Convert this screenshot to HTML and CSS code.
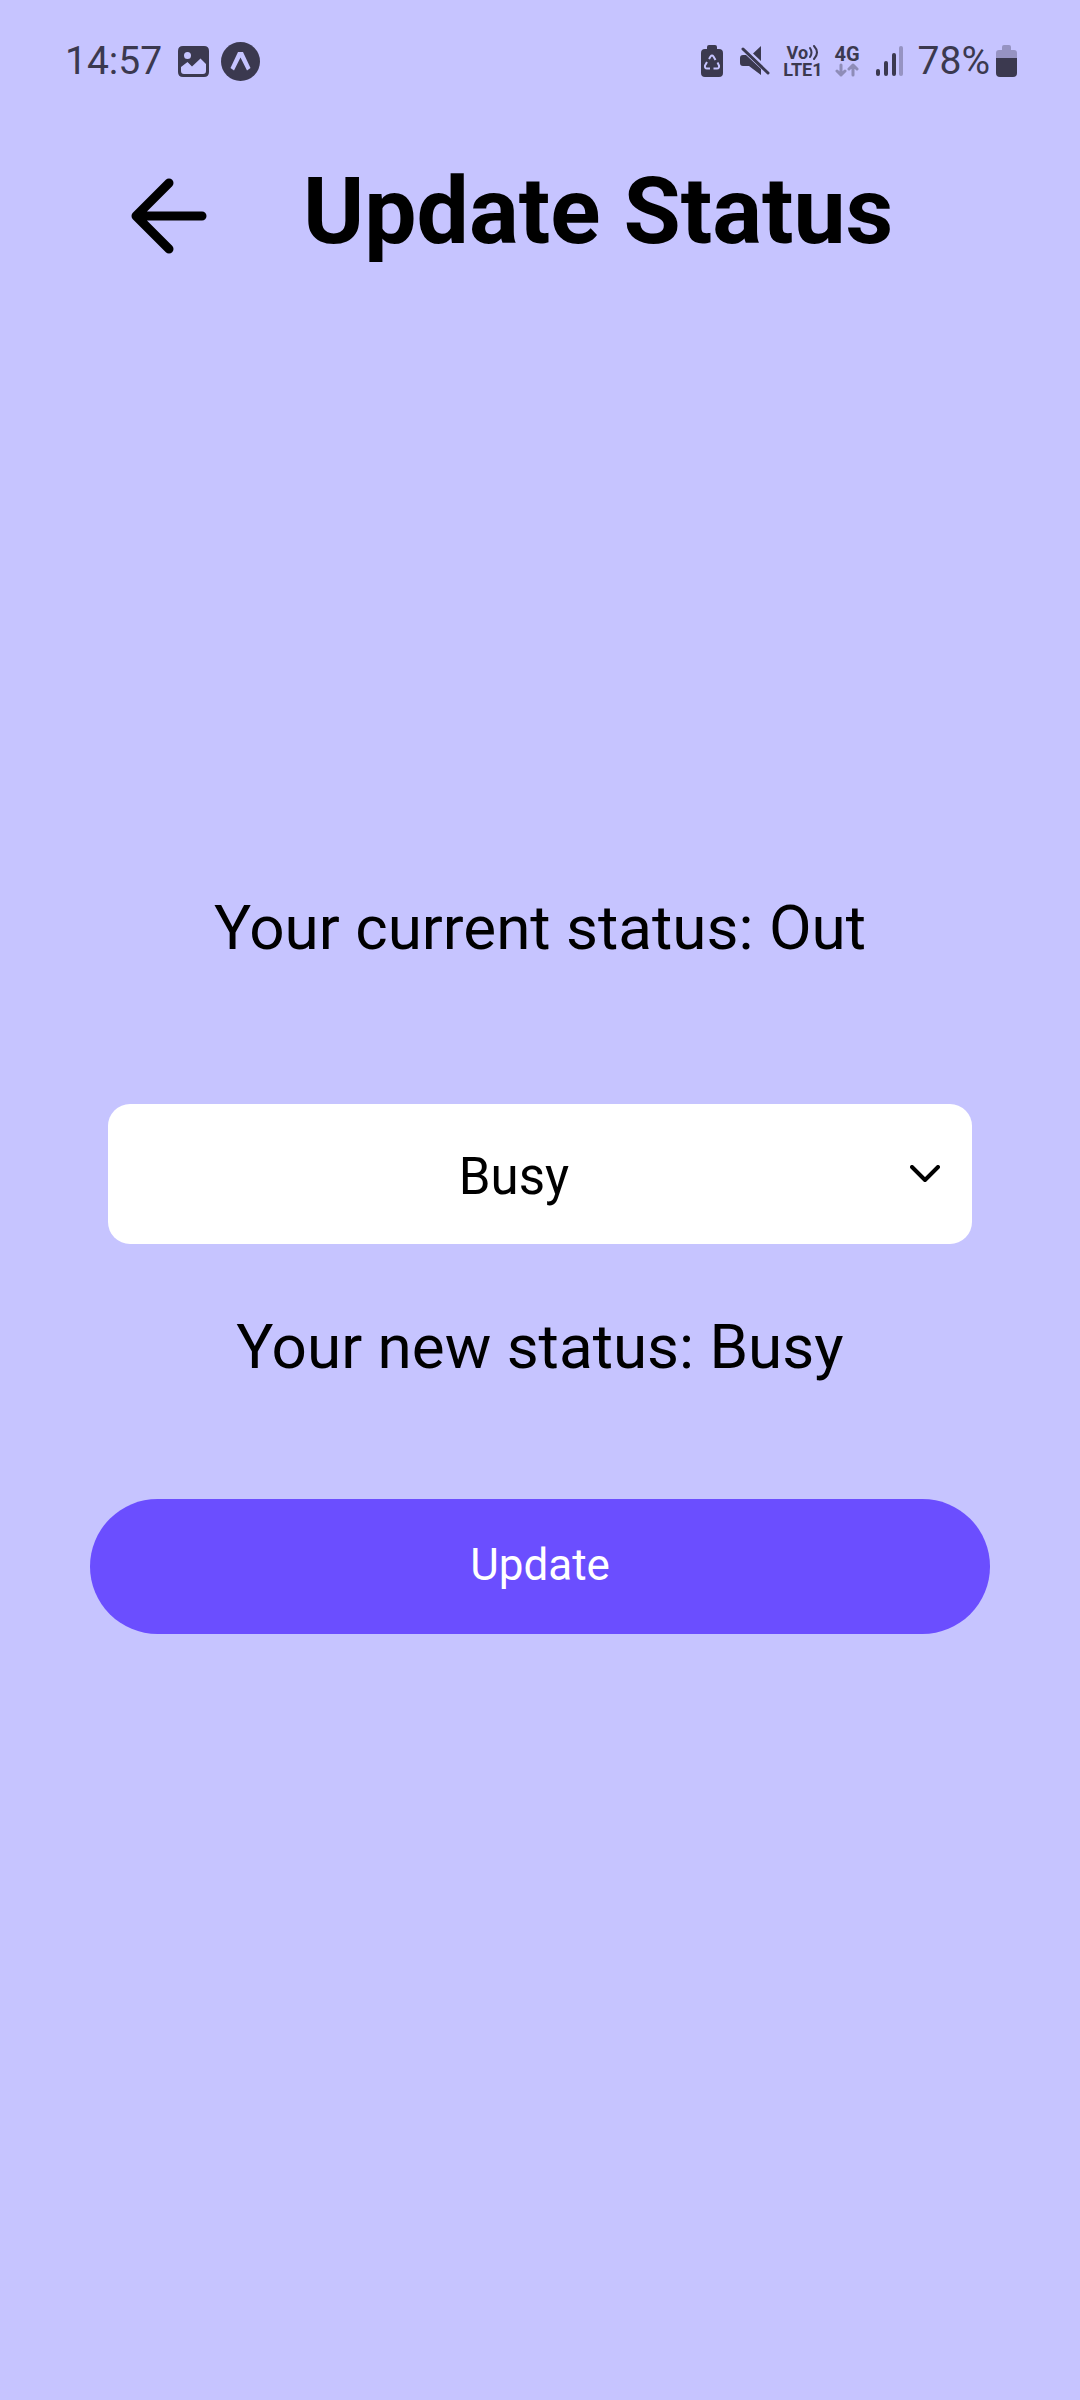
FILE: index.html
```html
<!DOCTYPE html>
<html lang="en">
<head>
<meta charset="utf-8">
<meta name="viewport" content="width=device-width, initial-scale=1">
<title>Update Status</title>
<link rel="stylesheet" href="styles.css">
</head>
<body>
<div class="status-bar">
  <div class="status-left">
    <span class="clock">14:57</span>
    <svg class="icon-picture" width="31" height="31" viewBox="0 0 31 31" aria-hidden="true">
      <path fill="currentColor" fill-rule="evenodd" d="M5 0H26Q31 0 31 5V26Q31 31 26 31H5Q0 31 0 26V5Q0 0 5 0ZM9.500 6A3.500 3.500 0 1 0 9.500 13A3.500 3.500 0 1 0 9.500 6ZM3 21V25Q3 28 6 28H25Q28 28 28 25V18L22.500 12.500L14 20.500L9.500 16Z"/>
    </svg>
    <svg class="icon-app" width="39" height="39" viewBox="0 0 39 39" aria-hidden="true">
      <circle cx="19.500" cy="19.500" r="19.500" fill="currentColor"/>
      <path class="icon-cutout" d="M17 10H22L29.500 26L26 28.500L19.500 15.500L13 28.500L9.500 26Z"/>
    </svg>
  </div>
  <div class="status-right">
    <svg width="22" height="32" viewBox="0 0 22 32" aria-hidden="true">
      <path fill="currentColor" d="M8 0H14Q16 0 16 2V4H18Q22 4 22 8V28Q22 32 18 32H4Q0 32 0 28V8Q0 4 4 4H6V2Q6 0 8 0Z"/>
      <path class="icon-outline" d="M8 14L9.500 11.500Q11 9.500 12.500 11.500L14.500 15M16.500 17.500L18 20.500Q18.500 23.500 16 23.500H12.500M9 23.500H6Q3.500 23.500 4 20.500L6 17"/>
    </svg>
    <svg class="icon-mute" width="30" height="30" viewBox="0 0 30 30" aria-hidden="true">
      <path fill="currentColor" d="M21 0V15L13 7.500ZM3 9H6L21 23V29L9 20H3Q0 20 0 17V12Q0 9 3 9Z"/>
      <path fill="none" stroke="currentColor" stroke-width="3" stroke-linecap="round" d="M3 3L28 27"/>
    </svg>
    <div class="volte">
      <div class="volte-top">Vo<svg width="11" height="17" viewBox="0 0 11 17" aria-hidden="true"><path fill="none" stroke="currentColor" stroke-width="2" stroke-linecap="round" d="M2 4Q5 8.500 2 13M6 2Q12 8.500 6 15"/></svg></div>
      <div>LTE1</div>
    </div>
    <div class="network">
      <span>4G</span>
      <svg width="24" height="14" viewBox="0 0 24 14" aria-hidden="true"><path fill="none" stroke="currentColor" stroke-width="3" stroke-linecap="round" stroke-linejoin="round" d="M6 2V12M2 8L6 12L10 8M18 12V2M14 6L18 2L22 6"/></svg>
    </div>
    <svg class="icon-signal" width="28" height="30" viewBox="0 0 28 30" aria-hidden="true">
      <g fill="currentColor"><rect y="23" width="4" height="7" rx="2"/><rect x="8" y="15" width="4" height="15" rx="2"/><rect x="16" y="7" width="4" height="23" rx="2"/><rect x="23" width="4" height="30" rx="2" opacity=".35"/></g>
    </svg>
    <span class="percent">78%</span>
    <svg width="21" height="32" viewBox="0 0 21 32" aria-hidden="true">
      <path fill="currentColor" opacity=".35" d="M0 13V8Q0 5 3 5H6V2Q6 0 8 0H13Q15 0 15 2V5H18Q21 5 21 8V13Z"/>
      <path fill="currentColor" d="M0 13H21V28Q21 32 17 32H4Q0 32 0 28Z"/>
    </svg>
  </div>
</div>

<header class="header">
  <button class="back" type="button" aria-label="Back">
    <svg width="76" height="76" viewBox="0 0 76 76" aria-hidden="true"><path fill="none" stroke="currentColor" stroke-width="9" stroke-linecap="round" stroke-linejoin="round" d="M38 5L5 38L38 71M5 38H71"/></svg>
  </button>
  <h1 class="title">Update Status</h1>
</header>

<main class="content">
  <p class="status-text">Your current status: Out</p>
  <div class="picker">
    <select class="picker-select" aria-label="New status">
      <option>Available</option>
      <option selected>Busy</option>
      <option>Out</option>
    </select>
    <svg class="picker-arrow" width="30" height="18" viewBox="0 0 30 18" aria-hidden="true"><path fill="none" stroke="currentColor" stroke-width="4" stroke-linecap="round" stroke-linejoin="round" d="M2 2L15 15L28 2"/></svg>
  </div>
  <p class="status-text">Your new status: Busy</p>
  <button class="update" type="button">Update</button>
</main>
</body>
</html>
```
FILE: styles.css
```css
* {
  box-sizing: border-box;
}

body {
  margin: 0;
  min-height: 100vh;
  background: #c6c4ff;
  color: #000;
  font-family: Roboto, sans-serif;
}

svg {
  display: block;
  flex: none;
}

.status-bar {
  display: flex;
  justify-content: space-between;
  align-items: center;
  height: 122px;
  padding: 0 63px 0 65px;
  color: #3b394f;
  font-size: 39px;
  line-height: 48px;
}

.status-left,
.status-right {
  display: flex;
  align-items: center;
}

.icon-picture {
  margin-left: 16px;
}

.icon-app {
  margin-left: 12px;
}

.icon-cutout {
  fill: #c6c4ff;
}

.icon-outline {
  fill: none;
  stroke: #c6c4ff;
  stroke-width: 2;
}

.icon-mute {
  margin-left: 17px;
}

.volte {
  margin-left: 13px;
  font-size: 18px;
  font-weight: 700;
  line-height: 17px;
}

.volte-top {
  display: flex;
  justify-content: center;
}

.network {
  display: flex;
  flex-direction: column;
  align-items: center;
  margin-left: 12px;
  font-size: 20px;
  font-weight: 700;
  line-height: 18px;
}

.network svg {
  opacity: .4;
}

.icon-signal {
  margin-left: 16px;
}

.percent {
  margin-left: 14px;
}

.status-right > :last-child {
  margin-left: 6px;
}

.header {
  display: flex;
  align-items: center;
  gap: 96px;
  padding: 34px 131px 0;
}

.back {
  padding: 8px 0 0;
  border: 0;
  background: none;
  color: inherit;
  cursor: pointer;
}

.title {
  margin: 0;
  font-size: 93px;
  font-weight: 700;
  line-height: 112px;
  white-space: nowrap;
}

.content {
  display: flex;
  flex-direction: column;
  padding: 623px 90px 0;
}

.status-text {
  margin: 0;
  font-size: 62px;
  line-height: 74px;
  text-align: center;
}

.picker {
  display: grid;
  align-items: center;
  margin: 139px 18px 66px;
}

.picker-select,
.picker-arrow {
  grid-area: 1 / 1;
}

.picker-select {
  appearance: none;
  width: 100%;
  height: 140px;
  padding: 6px 72px 0 20px;
  border: 0;
  border-radius: 22px;
  background: #fff;
  color: inherit;
  font: 51px/60px Roboto, sans-serif;
  text-align: center;
  text-align-last: center;
}

.picker-arrow {
  justify-self: end;
  margin-right: 32px;
  pointer-events: none;
}

.update {
  height: 135px;
  margin-top: 115px;
  padding: 0 0 4px;
  border: 0;
  border-radius: 68px;
  background: #6b4eff;
  color: #fff;
  font: 44px/54px Roboto, sans-serif;
  cursor: pointer;
}
```
